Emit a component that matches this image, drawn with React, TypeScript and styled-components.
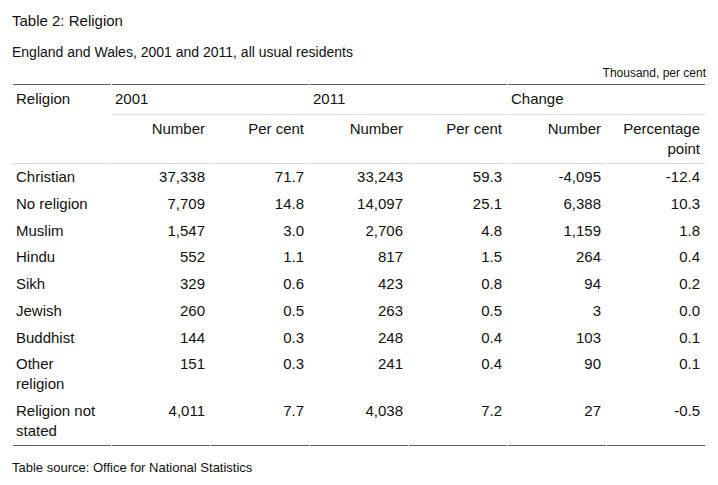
import styled, { createGlobalStyle } from 'styled-components';

const GlobalStyle = createGlobalStyle`
    body {
        margin: 0;
        background: #ffffff;
        color: #111111;
        font-family: "Liberation Sans", Arial, sans-serif;
    }
`;

type Row = {
    religion: string;
    values: string[];
}

const rows: Row[] = [
    { religion: 'Christian', values: ['37,338', '71.7', '33,243', '59.3', '-4,095', '-12.4'] },
    { religion: 'No religion', values: ['7,709', '14.8', '14,097', '25.1', '6,388', '10.3'] },
    { religion: 'Muslim', values: ['1,547', '3.0', '2,706', '4.8', '1,159', '1.8'] },
    { religion: 'Hindu', values: ['552', '1.1', '817', '1.5', '264', '0.4'] },
    { religion: 'Sikh', values: ['329', '0.6', '423', '0.8', '94', '0.2'] },
    { religion: 'Jewish', values: ['260', '0.5', '263', '0.5', '3', '0.0'] },
    { religion: 'Buddhist', values: ['144', '0.3', '248', '0.4', '103', '0.1'] },
    { religion: 'Other religion', values: ['151', '0.3', '241', '0.4', '90', '0.1'] },
    { religion: 'Religion not stated', values: ['4,011', '7.7', '4,038', '7.2', '27', '-0.5'] },
];

const subHeaders = ['Number', 'Per cent', 'Number', 'Per cent', 'Number', 'Percentage point'];

const Page = styled.div`
    width: 694px;
    padding: 12px;
`;

const Title = styled.h2`
    margin: 0;
    font-size: 15px;
    line-height: 17px;
    font-weight: normal;
`;

const Subtitle = styled.p`
    margin: 15px 0 0;
    font-size: 14px;
    line-height: 16px;
`;

const Units = styled.p`
    margin: 6px 0 0;
    font-size: 12px;
    line-height: 14px;
    text-align: right;
`;

const Table = styled.table`
    margin-top: 4px;
    width: 694px;
    table-layout: fixed;
    border-collapse: separate;
    border-spacing: 1px 0;
    font-size: 15px;
    line-height: 20px;
`;

const HeadCell = styled.th<{ $align?: 'left' | 'right'; $top?: boolean }>`
    font-weight: normal;
    text-align: ${p => p.$align ?? 'left'};
    vertical-align: top;
    padding: ${p => p.$top ? '4px 5px 5px 3px' : '4px 5px 4px 3px'};
    border-top: ${p => p.$top ? '1px solid #5f5f5f' : 'none'};
    border-bottom: 1px solid #dcdcdc;
`;

const Cell = styled.td<{ $align?: 'left' | 'right'; $last?: boolean }>`
    text-align: ${p => p.$align ?? 'right'};
    vertical-align: top;
    padding: 3px 5px 3.75px 3px;
    border-bottom: ${p => p.$last ? '1px solid #5f5f5f' : 'none'};
`;

const Source = styled.p`
    margin: 14px 0 0;
    font-size: 13px;
    line-height: 15px;
`;

export default function App() {
    return (
        <Page>
            <GlobalStyle />
            <Title>Table 2: Religion</Title>
            <Subtitle>England and Wales, 2001 and 2011, all usual residents</Subtitle>
            <Units>Thousand, per cent</Units>
            <Table>
                <thead>
                    <tr>
                        <HeadCell $top rowSpan={2}>Religion</HeadCell>
                        <HeadCell $top colSpan={2}>2001</HeadCell>
                        <HeadCell $top colSpan={2}>2011</HeadCell>
                        <HeadCell $top colSpan={2}>Change</HeadCell>
                    </tr>
                    <tr>
                        {subHeaders.map((label, i) => (
                            <HeadCell key={i} $align="right">{label}</HeadCell>
                        ))}
                    </tr>
                </thead>
                <tbody>
                    {rows.map((row, r) => {
                        const last = r === rows.length - 1;
                        return (
                            <tr key={row.religion}>
                                <Cell $align="left" $last={last}>{row.religion}</Cell>
                                {row.values.map((v, i) => (
                                    <Cell key={i} $last={last}>{v}</Cell>
                                ))}
                            </tr>
                        );
                    })}
                </tbody>
            </Table>
            <Source>Table source: Office for National Statistics</Source>
        </Page>
    );
}
